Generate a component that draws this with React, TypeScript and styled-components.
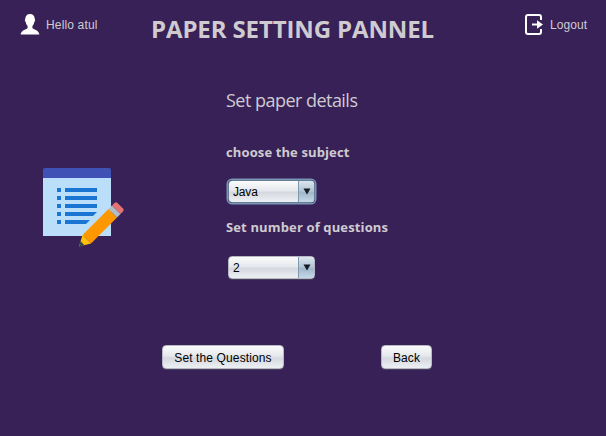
import React from "react";
import styled, { createGlobalStyle } from "styled-components";

const GlobalStyle = createGlobalStyle`
  * { box-sizing: border-box; }
  body { margin: 0; background: #382157; }
`;

const Page = styled.div`
  width: 606px;
  height: 436px;
  background: #382157;
  color: #cfcbd0;
  overflow: hidden;
  font-family: "Liberation Sans", Arial, sans-serif;
  display: grid;
  grid-template-rows: 50px 295px 1fr;
`;

const Header = styled.header`
  display: grid;
  grid-template-columns: 131px 374px 1fr;
  padding-left: 20px;
  align-items: start;
`;

const HeaderItem = styled.div<{ $gap: number }>`
  display: flex;
  align-items: center;
  gap: ${(p) => p.$gap}px;
  padding-top: 13px;
  height: 36px;
  font-size: 12px;
  white-space: nowrap;
  svg { flex: none; display: block; }
`;

const Text = styled.span<{ $spacing?: number }>`
  letter-spacing: ${(p) => p.$spacing ?? 0}px;
`;

const Title = styled.h1`
  margin: 0;
  padding-top: 13px;
  font: 700 24px/32px "Open Sans", "Noto Sans", sans-serif;
  letter-spacing: -0.12px;
  white-space: nowrap;
`;

const Main = styled.main`
  display: grid;
  grid-template-columns: 183px 1fr;
  padding-left: 43px;
`;

const Picture = styled.div`
  padding-top: 118px;
  svg { display: block; }
`;

const Form = styled.section`
  display: flex;
  flex-direction: column;
  align-items: flex-start;
  padding-top: 37px;
`;

const Subtitle = styled.h2`
  margin: 0 0 29px;
  font: 400 18px/26px "Open Sans", "Noto Sans", sans-serif;
  letter-spacing: -0.53px;
  white-space: nowrap;
`;

const Label = styled.label<{ $spacing: number }>`
  font: 700 13px/20px "Open Sans", "Noto Sans", sans-serif;
  letter-spacing: ${(p) => p.$spacing}px;
  white-space: nowrap;
`;

const controlFill = "linear-gradient(#fbfbfc, #e5e8ec 45%, #d5d9df 55%, #edf0f3)";

const Combo = styled.button<{ $focused?: boolean; $top: number; $bottom: number }>`
  display: flex;
  width: 87px;
  height: 23px;
  padding: 0;
  margin: ${(p) => p.$top}px 0 ${(p) => p.$bottom}px 2px;
  border: 1px solid ${(p) => (p.$focused ? "#687c98" : "#b5b8c2")};
  border-radius: 4px;
  overflow: hidden;
  background: ${controlFill};
  box-shadow: ${(p) => (p.$focused ? "0 0 0 1.5px #7796b3" : "0 1px 0 #4b3f60")};
  color: #000;
  font: 12px/21px "Liberation Sans", Arial, sans-serif;
  text-align: left;
`;

const Value = styled.span<{ $spacing?: number }>`
  flex: 1;
  padding-left: 4px;
  padding-top: 1px;
  letter-spacing: ${(p) => p.$spacing ?? 0}px;
`;

const Arrow = styled.span`
  display: flex;
  align-items: center;
  justify-content: center;
  width: 16px;
  height: 21px;
  border-left: 1px solid #8199ae;
  background: linear-gradient(#dce6ee, #b2c6d6 48%, #9fb8cb 55%, #c5dae8);
`;

const Actions = styled.footer`
  display: flex;
  align-items: flex-start;
  gap: 97px;
  padding-left: 162px;
`;

const Button = styled.button<{ $width: number; $spacing?: number }>`
  width: ${(p) => p.$width}px;
  height: 24px;
  padding: 1px 0 0;
  border: 1px solid #b7b9c2;
  border-radius: 4px;
  background: ${controlFill};
  box-shadow: 0 1px 0 #4b3f60;
  color: #000;
  font: 12px/20px "Liberation Sans", Arial, sans-serif;
  letter-spacing: ${(p) => p.$spacing ?? 0}px;
  white-space: nowrap;
`;

const UserIcon = () => (
  <svg width="20" height="21" viewBox="0 0 20 21" fill="#fff">
    <path d="M10 0C6.900 0 5.200 2 5.300 5c-.7.400-.5 2 .4 3 .3 1.800 1 3 1.900 4v2.100c-.7 1.600-6.400 1.900-7 6.400h18.800c-.6-4.500-6.300-4.800-7-6.400V12c.9-1 1.600-2.200 1.900-4 .9-1 1.100-2.600.4-3C14.800 2 13.100 0 10 0z" />
  </svg>
);

const LogoutIcon = () => (
  <svg width="19" height="22" viewBox="0 0 19 22" fill="none" stroke="#fff" strokeWidth="2">
    <path d="M16 6V3Q16 1 14 1H3Q1 1 1 3V18Q1 20 3 20H14Q16 20 16 18V15" />
    <path d="M7 10.500H14" />
    <path d="M12 6.300L18 10.500L12 14.700Z" fill="#fff" stroke="none" />
  </svg>
);

const PaperIcon = () => (
  <svg width="82" height="80" viewBox="0 0 82 80">
    <path d="M0 9H68V68H0Z" fill="#bbdefb" />
    <path d="M0 10V2Q0 0 2 0H66Q68 0 68 2V10Z" fill="#3f51b5" />
    <g fill="#1976d2">
      {[20, 28, 36, 44, 52].map((y) => (
        <React.Fragment key={y}>
          <path d={`M14 ${y}h4v4h-4z`} />
          <path d={y === 44 ? "M22 44H54L50 48H22Z" : y === 52 ? "M22 52H47L43 56H22Z" : `M22 ${y}h32v4h-32z`} />
        </React.Fragment>
      ))}
    </g>
    <path d="M65.500 41L74 49.500L48 75.500L39.500 67Z" fill="#ff9800" />
    <path d="M65.500 41L69 37.500L77.500 46L74 49.500Z" fill="#b0bec5" />
    <path d="M69 37.500L71.500 35Q73 33.500 74.500 35L80 40.500Q81.500 42 80 43.500L77.500 46Z" fill="#e57373" />
    <path d="M39.500 67L36 78.500L48 75.500Z" fill="#ffc107" />
    <path d="M37.500 73L36 78.700L41.500 77.300Z" fill="#37474f" />
  </svg>
);

const DownArrow = () => (
  <svg width="8" height="7" viewBox="0 0 8 7">
    <path d="M.5.5H7.500L4 6.500Z" fill="#171c22" />
  </svg>
);

export default function App() {
  return (
    <>
      <GlobalStyle />
      <Page>
        <Header>
          <HeaderItem $gap={6}>
            <UserIcon />
            <Text $spacing={0.15}>Hello atul</Text>
          </HeaderItem>
          <Title>PAPER SETTING PANNEL</Title>
          <HeaderItem $gap={6}>
            <LogoutIcon />
            <Text $spacing={0.1}>Logout</Text>
          </HeaderItem>
        </Header>
        <Main>
          <Picture>
            <PaperIcon />
          </Picture>
          <Form>
            <Subtitle>Set paper details</Subtitle>
            <Label $spacing={0.12}>choose the subject</Label>
            <Combo $focused $top={18} $bottom={14}>
              <Value $spacing={-0.15}>Java</Value>
              <Arrow><DownArrow /></Arrow>
            </Combo>
            <Label $spacing={0.14}>Set number of questions</Label>
            <Combo $top={19} $bottom={0}>
              <Value>2</Value>
              <Arrow><DownArrow /></Arrow>
            </Combo>
          </Form>
        </Main>
        <Actions>
          <Button $width={122} $spacing={0.12}>Set the Questions</Button>
          <Button $width={51} $spacing={0.12}>Back</Button>
        </Actions>
      </Page>
    </>
  );
}
